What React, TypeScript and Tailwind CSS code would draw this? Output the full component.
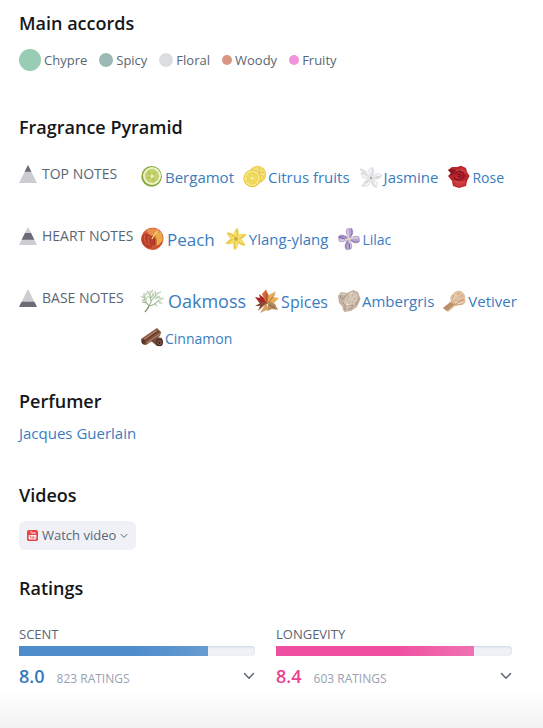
import { useState } from 'react';
import type { ReactNode } from 'react';

const accords = [
  { name: 'Chypre', dot: 'size-[22px] bg-[#98ccb5]' },
  { name: 'Spicy', dot: 'size-[14px] bg-[#9bbab6]' },
  { name: 'Floral', dot: 'size-[14px] bg-[#dcdddf]' },
  { name: 'Woody', dot: 'size-[10px] bg-[#d99783]' },
  { name: 'Fruity', dot: 'size-[10px] bg-[#f092dc]' },
];

function NoteIcon({ children }: { children: ReactNode }) {
  return (
    <svg viewBox="0 0 24 24" className="size-6 shrink-0" aria-hidden="true">
      {children}
    </svg>
  );
}

const petals = (n: number, offset = 0) => Array.from({ length: n }, (_, i) => offset + (360 / n) * i);

const Bergamot = () => (
  <NoteIcon>
    <circle cx="11.6" cy="11.4" r="10.3" fill="#86a83a" />
    <circle cx="12" cy="11" r="9" fill="#eef2cf" />
    {petals(9, 10).map(a => (
      <path key={a} d="M12 10.4 L9.4 5 Q12 2.6 14.6 5 Z" fill="#c3d06c" transform={`rotate(${a} 12 11)`} />
    ))}
    <path d="M8 6l3 4M15 7l-2 3M7 13l3-1M14 16l-1-3" stroke="#a3b83c" strokeWidth=".8" />
    <circle cx="12" cy="11" r="1.2" fill="#f4f5d9" />
  </NoteIcon>
);

const Citrus = () => (
  <NoteIcon>
    <circle cx="14.6" cy="9.4" r="8.6" fill="#efd355" />
    <circle cx="14.6" cy="9.4" r="7.2" fill="#f4e07a" />
    <path d="M17 3l-1 5 5-1M18 10l3 3" stroke="#e2bf3e" fill="none" strokeWidth=".8" />
    <circle cx="9.2" cy="13.4" r="8.8" fill="#e6c637" />
    <circle cx="9.2" cy="13.2" r="7.8" fill="#f7e88f" />
    {petals(8, 12).map(a => (
      <path key={a} d="M9.2 12.8 L6.9 7.8 Q9.2 5.6 11.5 7.8 Z" fill="#efd759" transform={`rotate(${a} 9.2 13.2)`} />
    ))}
    <circle cx="9.2" cy="13.2" r="1" fill="#fcf5cc" />
  </NoteIcon>
);

const Jasmine = () => (
  <NoteIcon>
    <path d="M1 4l7 4M2 8l5 1M3 21l5-4" stroke="#dcdee0" strokeWidth="2.2" />
    {petals(5, 6).map(a => (
      <g key={a} transform={`rotate(${a} 12 13)`}>
        <path d="M12 13 Q5 6 11.5 1.5 Q18 5 12 13Z" fill="#e6e8eb" />
        <path d="M12.4 11 Q15 6 12 2.4" fill="none" stroke="#d3d6da" strokeWidth=".8" />
        <path d="M10.5 8l.6-4" stroke="#f8f9fa" strokeWidth="1.2" />
      </g>
    ))}
    <path d="M7 18l3-3M17 11l3 1" stroke="#c3c6cb" strokeWidth=".8" />
    <circle cx="12" cy="13" r="1.2" fill="#b09d88" />
  </NoteIcon>
);

const Rose = () => (
  <NoteIcon>
    <path d="M5 2 L10 2 L14 .8 L19 3 L20 7 L22.6 11 L20 16 L19 21 L12 23 L6 21 L5 16 L1 11 L4 8 L1 5Z" fill="#b7262d" />
    <path d="M4 4 L9 5 L6 10 L2 11 L4 8 1 5Z" fill="#8b1822" />
    <path d="M8 14 Q12 18 19 15 L18 20 L12 22 L7 20Z" fill="#cb3638" />
    <path d="M13 2 L18 4 L20 9 L16 9Z" fill="#cc3539" />
    <path d="M8 9 Q12 4 16 8 Q19 12 14 14 Q8 16 7 12" fill="none" stroke="#8b1520" strokeWidth="1.5" />
    <path d="M10 10 Q14 8 14 11 Q12 13 11 11" fill="none" stroke="#6e0d18" />
    <path d="M6 16 Q10 19 18 17M9 6 Q12 3 16 6" fill="none" stroke="#dc5352" strokeWidth=".8" />
  </NoteIcon>
);

const Peach = () => (
  <NoteIcon>
    <path d="M3 6 Q7 0 15 .8 Q22 3 23.5 10 Q24 18 17 22 Q9 25 3 18 Q-1 12 3 6Z" fill="#ce5634" />
    <path d="M6 3 Q15 -1 20 4 Q18 9 13 9 Q8 8 6 3Z" fill="#e78e50" />
    <path d="M15 9 Q17 5 21 5 Q24 11 22 16 Q19 19 16 19 Q18 14 15 9Z" fill="#eaaa4b" />
    <path d="M3 8 Q8 5 12 10 Q15 16 11 21 Q5 21 2 15Z" fill="#b83a2c" />
    <path d="M5 8 Q3 13 7 18M9 9 Q7 14 10 19" fill="none" stroke="#d77148" strokeWidth="1.2" opacity=".7" />
    <path d="M12 9 Q15 12 14 18" fill="none" stroke="#982923" strokeWidth="1.3" />
    <path d="M15 20 Q20 19 22 15" fill="none" stroke="#cb4b2d" strokeWidth="1.4" />
    <path d="M12 12 Q14 7 18 4" fill="none" stroke="#f5d778" strokeWidth="1.5" />
  </NoteIcon>
);

const YlangYlang = () => (
  <NoteIcon>
    {petals(6, 3).map(a => (
      <g key={a} transform={`rotate(${a} 12 12)`}>
        <path d="M10 13 Q8 5 12.5 .4 Q16 6 13.6 13Z" fill="#f1d75b" />
        <path d="M13 11 Q14 6 12.6 2" fill="none" stroke="#dfbd43" strokeWidth=".9" />
        <path d="M11.5 10V5" stroke="#f8e88a" strokeWidth=".8" />
      </g>
    ))}
    <circle cx="12" cy="12" r="1.7" fill="#c5a536" />
  </NoteIcon>
);

const Lilac = () => (
  <NoteIcon>
    {petals(4, 8).map(a => (
      <g key={a} transform={`rotate(${a} 12 12)`}>
        <path d="M12 12 Q5.8 6 8.5 2 L13 .6 Q18.5 5 12 12Z" fill="#b8a7cf" />
        <path d="M12 11 Q9 6 10 3" fill="none" stroke="#dcd2e7" strokeWidth="1.3" />
        <path d="M12.4 10.5 Q15.5 6 13 2" fill="none" stroke="#8c74ae" />
      </g>
    ))}
    <path d="M2 10l6 2M12 16l1 6" stroke="#79569b" />
    <circle cx="12" cy="12" r="1.6" fill="#e7dcb0" />
  </NoteIcon>
);

const Oakmoss = () => (
  <NoteIcon>
    <path d="M5 23 Q9 18 11 13 M9 17 Q6 14 4 9 M9 17 Q15 16 19 11 M11 13 L10 4 M11 12 L17 5 M7 14 L2 13" fill="none" stroke="#a0b596" strokeWidth="1.1" />
    <path d="M4 9l-3-2m3 2V4m0 3l3-3M10 6L7 2m3 2l3-3m-2 8l3-4m2 1l-1-4m2 3l4-2m-6 6l5-1m-1 3l5-2m-6 3l4 3m-8-1l3 3m-10-7l-3-3M6 12l-4-1M10 9L7 7m10 0l3 2m-6-2l-2-3" fill="none" stroke="#bacdb1" strokeWidth="1.3" />
    <path d="M3 5l2 1M9 3l2 1M17 4l2 0M20 9l2 1M19 14l2-1M8 8l1-1M13 4l1 1M15 10l2-1M5 11l2 0" stroke="#cfddc8" strokeWidth="2" />
    <path d="M5 23 Q8 20 9 17" fill="none" stroke="#7f9070" strokeWidth="1.1" />
  </NoteIcon>
);

const Spices = () => (
  <NoteIcon>
    <path d="M0 8 L5 9 L4 5 L9 9 L13 15 L6 16Z" fill="#a8262a" />
    <path d="M11 14 L7 5 L11 .5 L14 7 L14 14Z" fill="#d8692f" />
    <path d="M12 14 L14 6 L21 2 L18 8 L24 9 L17 16Z" fill="#e8ad58" />
    <path d="M14 12 L20 15 L23 21 L17 20 L12 22Z" fill="#b18c61" />
    <path d="M12 13 L3 22 L5 17 L0 17 L7 13Z" fill="#864d34" />
    <path d="M11 14 L5 24 L14 20Z" fill="#d7a25d" />
    <path d="M12 14L4 9M12 13L11 4M13 14l7-9M13 15l7 4M11 15l-6 4" stroke="#8d3d27" strokeWidth=".6" />
  </NoteIcon>
);

const Ambergris = () => (
  <NoteIcon>
    <path d="M1 7 L4 3 L10 4 L16 1 L21 3 L23.5 10 L20 18 L14 22 L7 23 L5 17 L2 14Z" fill="#c5b3a1" />
    <path d="M9 8 L14 3 L20 5 L21 12 L15 18 L9 19 L7 13Z" fill="#d5c6b5" />
    <path d="M3 8l3-3 3 2-4 3zM6 14l3 3-2 4M11 17l5-1-2 4M22 9l-3 7" fill="none" stroke="#a18d7b" strokeWidth=".9" />
    <path d="M11 8h1M15 6h1M17 10h1M12 13h1M10 11h1M15 13h1M9 6h1M18 14h1M12 20h1" stroke="#a8937f" strokeWidth="1.1" />
    <path d="M4 5l5 1M13 5l3-2M9 15l4 1" stroke="#e9dfd4" />
  </NoteIcon>
);

const Vetiver = () => (
  <NoteIcon>
    <path d="M0 19 L8 12 Q6 7 10 5 Q13 1 18 2 Q23 5 22 10 Q24 15 18 16 L12 17 L5 23Z" fill="#dfbf9e" />
    <path d="M0 19 L8 13 L11 16 L4 22Z" fill="#bb8c66" />
    <path d="M4 20L10 13 16 4M5 21L12 14 20 6M9 13L11 6M11 16L21 10M12 16l8-1M13 12l8-1" fill="none" stroke="#c7996f" strokeWidth=".8" />
    <path d="M9 13L15 6M12 14L19 8M10 11l3-6M14 15l6-2" stroke="#efdcc6" />
  </NoteIcon>
);

const Cinnamon = () => (
  <NoteIcon>
    <path d="M1 13 L17 2 L21 6 L20 10 L6 19 Q1 19 1 13Z" fill="#80523f" />
    <path d="M3 14 L17 4 M7 17 L20 8" stroke="#b08068" strokeWidth="1.4" />
    <path d="M3 16L19 5" stroke="#5d3728" />
    <path d="M11 15 L17 11 L22 12 L23 16 L21 20 L17 20Z" fill="#74483a" />
    <ellipse cx="19.5" cy="16.6" rx="3.5" ry="3.6" fill="#462a22" />
    <ellipse cx="19.5" cy="16.6" rx="1.8" ry="1.9" fill="none" stroke="#a1735d" strokeWidth=".9" />
    <ellipse cx="3.5" cy="15.6" rx="1.8" ry="2.6" fill="#593628" />
  </NoteIcon>
);

const pyramid = [
  {
    label: 'Top notes',
    fill: 'M9 0 L12.4 6.8 H5.6Z',
    notes: [
      { name: 'Bergamot', size: 'gap-px text-[15px]', icon: Bergamot },
      { name: 'Citrus fruits', size: 'gap-px text-[15px]', icon: Citrus },
      { name: 'Jasmine', size: 'gap-px text-[15px]', icon: Jasmine },
      { name: 'Rose', size: 'gap-px text-[14px]', icon: Rose },
    ],
  },
  {
    label: 'Heart notes',
    fill: 'M6 6 H12 L15.4 12.8 H2.6Z',
    notes: [
      { name: 'Peach', size: 'gap-[3px] text-[17px]', icon: Peach },
      { name: 'Ylang-ylang', size: 'gap-px text-[15px]', icon: YlangYlang },
      { name: 'Lilac', size: 'gap-px text-[14px]', icon: Lilac },
    ],
  },
  {
    label: 'Base notes',
    fill: 'M2.6 12.8 H15.4 L18 18 H0Z',
    notes: [
      { name: 'Oakmoss', size: 'gap-1 text-[18px]', icon: Oakmoss },
      { name: 'Spices', size: 'gap-0.5 text-[16px]', icon: Spices },
      { name: 'Ambergris', size: 'gap-px text-[15px]', icon: Ambergris },
      { name: 'Vetiver', size: 'gap-px text-[15px]', icon: Vetiver },
      { name: 'Cinnamon', size: 'gap-px text-[14px]', icon: Cinnamon },
    ],
  },
];

const ratings = [
  {
    label: 'Scent',
    score: 8.0,
    count: 823,
    bar: 'bg-linear-to-r from-[#4e8ccc] from-60% to-[#659bd0]',
    text: 'text-[#3779bd]',
  },
  {
    label: 'Longevity',
    score: 8.4,
    count: 603,
    bar: 'bg-linear-to-r from-[#ee4f9f] from-60% to-[#ef71b3]',
    text: 'text-[#eb4290]',
  },
];

function Heading({ children }: { children: ReactNode }) {
  return <h2 className="text-[18px] leading-6 font-semibold text-[#14171a]">{children}</h2>;
}

function Chevron({ className }: { className: string }) {
  return (
    <svg viewBox="0 0 12 12" className={className} fill="none" stroke="currentColor" strokeLinecap="round" strokeLinejoin="round" aria-hidden="true">
      <path d="M1.5 3.5 L6 8.2 L10.5 3.5" strokeWidth="1.5" />
    </svg>
  );
}

function WatchIcon() {
  return (
    <svg viewBox="0 0 12 12" className="size-[11px]" aria-hidden="true">
      <rect x="0" y="0" width="12" height="12" rx="2" fill="#e94343" />
      <path d="M3.5 1.2l1 1.6v1.4M5.4 1.2l-.9 1.6M6 2.4v1.6h1V2.4M8.2 2.4v1.7h.8V2.4" fill="none" stroke="#fff" strokeWidth=".6" />
      <rect x="1.8" y="5.4" width="8.4" height="5" rx="1" fill="#fff" />
      <path d="M2.8 6.7h1.8M3.7 6.7v2.6M5.3 7.2v1.9h1V7.2M7.2 6.3v2.9M8.2 8h1.1v1.2" fill="none" stroke="#e94343" strokeWidth=".7" />
    </svg>
  );
}

export default function App() {
  const [videoOpen, setVideoOpen] = useState(false);
  const [openRating, setOpenRating] = useState<string | null>(null);

  return (
    <main className="bg-white font-['Open_Sans',sans-serif] text-[#5a6673]">
      <div className="pt-[11px] px-[19px]">
        <section>
          <Heading>Main accords</Heading>
          <ul className="mt-[14px] flex flex-wrap items-center gap-3 text-[13px] leading-[22px]">
            {accords.map(a => (
              <li key={a.name} className="flex items-center gap-[3px]">
                <span className={`rounded-full ${a.dot}`} />
                {a.name}
              </li>
            ))}
          </ul>
        </section>

        <section className="mt-11">
          <Heading>Fragrance Pyramid</Heading>
          <div className="mt-[19px] flex flex-col gap-[25px]">
            {pyramid.map(row => (
              <div key={row.label} className="flex">
                <h3 className="flex h-[31px] w-[121px] shrink-0 items-center gap-[5px] text-[14px] whitespace-nowrap uppercase">
                  <svg viewBox="0 0 18 18" className="size-[18px] shrink-0" aria-hidden="true">
                    <path d="M9 0 L18 18 H0Z" fill="#cccdd1" />
                    <path d={row.fill} fill="#6c6c79" />
                  </svg>
                  {row.label}
                </h3>
                <ul className="flex flex-wrap gap-x-[9px]">
                  {row.notes.map(note => (
                    <li key={note.name}>
                      <a href="#" className={`flex h-[37px] items-center text-[#3a7cc0] ${note.size}`}>
                        <note.icon />
                        <span className="pt-[2px]">{note.name}</span>
                      </a>
                    </li>
                  ))}
                </ul>
              </div>
            ))}
          </div>
        </section>

        <section className="mt-[33px]">
          <Heading>Perfumer</Heading>
          <a href="#" className="mt-2 block w-fit text-[15px] leading-6 text-[#3a7cc0]">Jacques Guerlain</a>
        </section>

        <section className="mt-[38px]">
          <Heading>Videos</Heading>
          <button
            type="button"
            aria-expanded={videoOpen}
            onClick={() => setVideoOpen(!videoOpen)}
            className="mt-[14px] flex h-[29px] items-center gap-1 rounded-md bg-[#f0f1f7] px-2 text-[13px]"
          >
            <WatchIcon />
            Watch video
            <Chevron className="size-2" />
          </button>
        </section>

        <section className="mt-[26px] pr-3">
          <Heading>Ratings</Heading>
          <div className="mt-6 grid grid-cols-2 gap-[21px]">
            {ratings.map(r => (
              <div key={r.label}>
                <h3 className="text-[13px] leading-5 uppercase">{r.label}</h3>
                <div className="mt-[2px] h-[10px] overflow-hidden rounded-r-sm bg-[#eff1f7] shadow-[inset_0_1px_2px_#ccd5e3]">
                  <div className={`h-full ${r.bar}`} style={{ width: `${r.score * 10}%` }} />
                </div>
                <button
                  type="button"
                  aria-expanded={openRating === r.label}
                  onClick={() => setOpenRating(openRating === r.label ? null : r.label)}
                  className="mt-2 flex w-full items-start"
                >
                  <span className={`text-[18px] leading-6 font-semibold ${r.text}`}>{r.score.toFixed(1)}</span>
                  <span className="ml-3 pt-1 text-[12px] leading-[22px] text-[#9a9fb3] uppercase">{r.count} ratings</span>
                  <Chevron className="mt-1.5 ml-auto size-3" />
                </button>
              </div>
            ))}
          </div>
        </section>
      </div>
      <div className="h-10 bg-linear-to-b from-white to-[#f1f1f1]" />
    </main>
  );
}
